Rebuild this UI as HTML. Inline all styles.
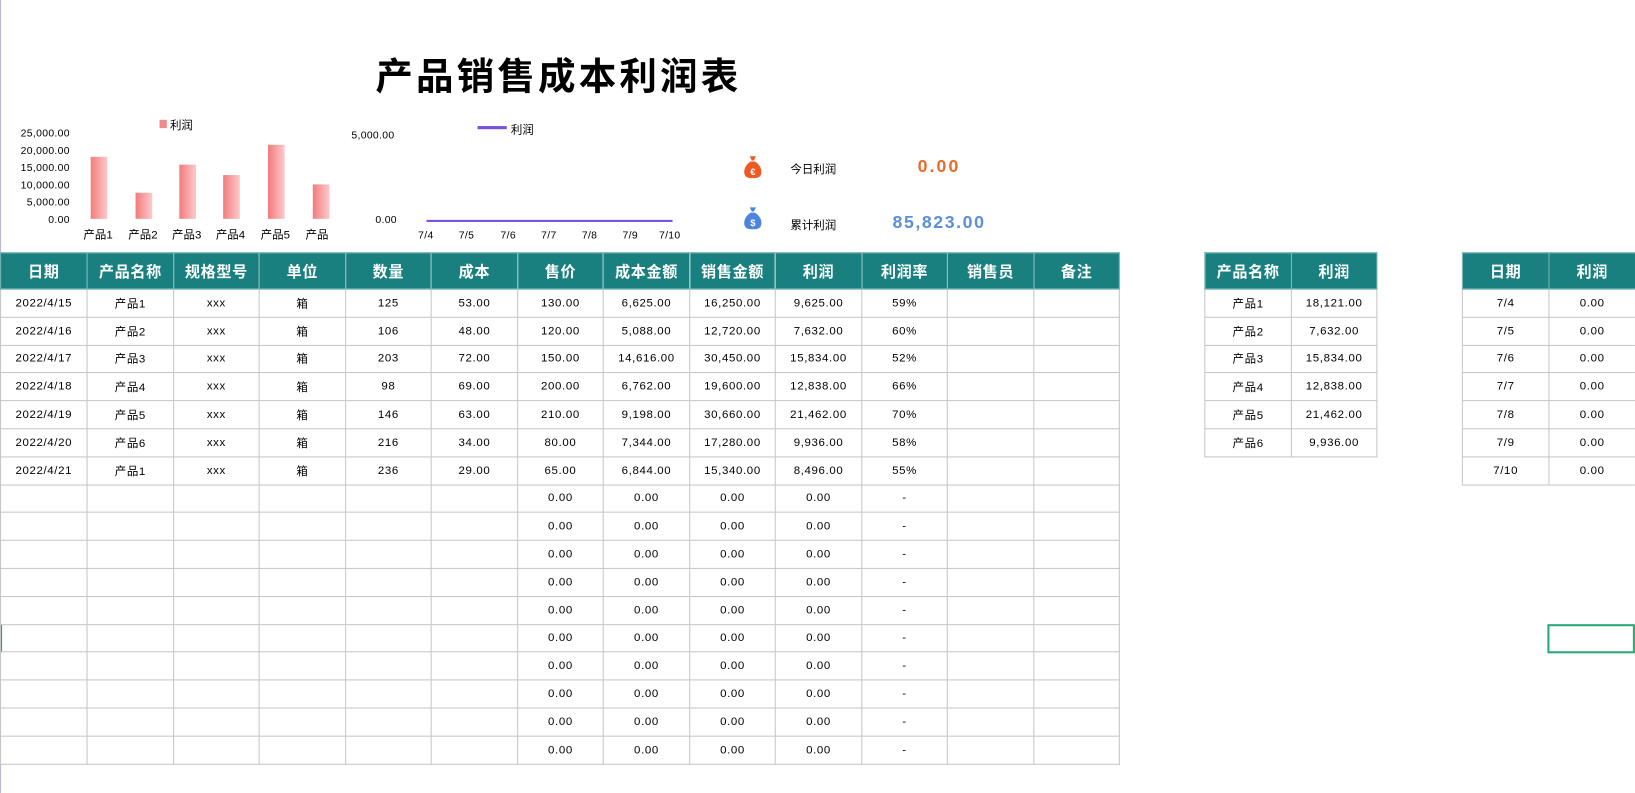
<!DOCTYPE html>
<html><head><meta charset="utf-8"><style>
html,body{margin:0;padding:0;background:#fff;overflow:hidden;width:1635px;height:793px}
#w{position:absolute;left:0;top:0;width:1568px;height:761px;transform:scale(1.0427,1.042);transform-origin:0 0;font-family:"Liberation Sans","Noto Sans CJK SC",sans-serif;color:#000}
.a{position:absolute;white-space:nowrap}
table{position:absolute;border-collapse:collapse;table-layout:fixed}
td,th{border:1px solid #c6c6c6;text-align:center;font-size:11px;height:25.8px;padding:0;overflow:hidden;white-space:nowrap}
th{background:#19807f;color:#fff;font-size:14.5px;font-weight:bold;height:34px;border-color:#6fb0b0}
.m{letter-spacing:.6px}
.ax{font-size:10px;letter-spacing:.3px}
</style></head><body><div id="w">
<div class="a" style="left:0;top:0;width:1px;height:761px;background:#b8b8d8"></div>
<div class="a" style="left:0;top:599px;width:2px;height:27px;background:#2a9d6e"></div>
<div class="a" style="left:360px;top:45px;font-size:36px;font-weight:bold;letter-spacing:3px">产品销售成本利润表</div>

<!-- bar chart -->
<div class="a ax" style="left:15px;top:121px;line-height:16.6px;text-align:right;width:52px">25,000.00<br>20,000.00<br>15,000.00<br>10,000.00<br>5,000.00<br>0.00</div>
<div class="a" style="left:153px;top:115px;width:7px;height:8px;background:#f08a8a"></div>
<div class="a" style="left:163px;top:112px;font-size:11px">利润</div>
<svg class="a" style="left:80px;top:130px" width="250" height="85">
<defs><linearGradient id="g" x1="0" x2="1"><stop offset="0" stop-color="#f37b7b"/><stop offset="1" stop-color="#fcc9cb"/></linearGradient></defs>
<rect x="7" y="20.5" width="16" height="59.5" fill="url(#g)"/>
<rect x="50" y="55" width="16" height="25" fill="url(#g)"/>
<rect x="92" y="28" width="16" height="52" fill="url(#g)"/>
<rect x="134" y="38" width="16" height="42" fill="url(#g)"/>
<rect x="177" y="9" width="16" height="71" fill="url(#g)"/>
<rect x="220" y="47" width="16" height="33" fill="url(#g)"/>
</svg>
<div class="a" style="left:80px;top:217px;font-size:11px">产品1</div>
<div class="a" style="left:123px;top:217px;font-size:11px">产品2</div>
<div class="a" style="left:165px;top:217px;font-size:11px">产品3</div>
<div class="a" style="left:207px;top:217px;font-size:11px">产品4</div>
<div class="a" style="left:250px;top:217px;font-size:11px">产品5</div>
<div class="a" style="left:293px;top:217px;font-size:11px">产品</div>

<!-- line chart -->
<div class="a ax" style="left:337px;top:125px">5,000.00</div>
<div class="a ax" style="left:360px;top:206px">0.00</div>
<div class="a" style="left:458px;top:121px;width:28px;height:3px;background:#7a4fdc"></div>
<div class="a" style="left:490px;top:116px;font-size:11px">利润</div>
<div class="a" style="left:409px;top:211px;width:236px;height:2px;background:#7a4fdc"></div>
<div class="a ax" style="left:401px;top:221px">7/4</div>
<div class="a ax" style="left:440px;top:221px">7/5</div>
<div class="a ax" style="left:480px;top:221px">7/6</div>
<div class="a ax" style="left:519px;top:221px">7/7</div>
<div class="a ax" style="left:558px;top:221px">7/8</div>
<div class="a ax" style="left:597px;top:221px">7/9</div>
<div class="a ax" style="left:632px;top:221px">7/10</div>

<!-- kpi -->
<svg class="a" style="left:712px;top:148px" width="20" height="24"><path d="M7 2h6l-2 4h-2z" fill="#ee5a24"/><path d="M8 7h4c5 3 7 8 6 12-1 3-3 4-8 4s-7-1-8-4c-1-4 1-9 6-12z" fill="#ee5a24"/><text x="10" y="20" font-size="9" fill="#fff" text-anchor="middle" font-family="Liberation Sans" font-weight="bold">€</text></svg>
<svg class="a" style="left:712px;top:197px" width="20" height="24"><path d="M7 2h6l-2 4h-2z" fill="#4a86e0"/><path d="M8 7h4c5 3 7 8 6 12-1 3-3 4-8 4s-7-1-8-4c-1-4 1-9 6-12z" fill="#4a86e0"/><text x="10" y="20" font-size="9" fill="#fff" text-anchor="middle" font-family="Liberation Sans" font-weight="bold">$</text></svg>
<div class="a" style="left:758px;top:154px;font-size:11px">今日利润</div>
<div class="a" style="left:880px;top:150px;font-size:17px;font-weight:bold;color:#ee6a2a;letter-spacing:2px">0.00</div>
<div class="a" style="left:758px;top:208px;font-size:11px">累计利润</div>
<div class="a" style="left:856px;top:204px;font-size:17px;font-weight:bold;color:#5b8fd8;letter-spacing:1.5px">85,823.00</div>

<table class="m" style="left:0;top:242px;width:1073px">
<colgroup><col style="width:83px"><col style="width:83px"><col style="width:82px"><col style="width:83px"><col style="width:82px"><col style="width:83px"><col style="width:82px"><col style="width:83px"><col style="width:82px"><col style="width:83px"><col style="width:82px"><col style="width:83px"><col style="width:82px"></colgroup>
<tr><th>日期</th><th>产品名称</th><th>规格型号</th><th>单位</th><th>数量</th><th>成本</th><th>售价</th><th>成本金额</th><th>销售金额</th><th>利润</th><th>利润率</th><th>销售员</th><th>备注</th></tr>
<tr><td>2022/4/15</td><td>产品1</td><td>xxx</td><td>箱</td><td>125</td><td>53.00</td><td>130.00</td><td>6,625.00</td><td>16,250.00</td><td>9,625.00</td><td>59%</td><td></td><td></td></tr>
<tr><td>2022/4/16</td><td>产品2</td><td>xxx</td><td>箱</td><td>106</td><td>48.00</td><td>120.00</td><td>5,088.00</td><td>12,720.00</td><td>7,632.00</td><td>60%</td><td></td><td></td></tr>
<tr><td>2022/4/17</td><td>产品3</td><td>xxx</td><td>箱</td><td>203</td><td>72.00</td><td>150.00</td><td>14,616.00</td><td>30,450.00</td><td>15,834.00</td><td>52%</td><td></td><td></td></tr>
<tr><td>2022/4/18</td><td>产品4</td><td>xxx</td><td>箱</td><td>98</td><td>69.00</td><td>200.00</td><td>6,762.00</td><td>19,600.00</td><td>12,838.00</td><td>66%</td><td></td><td></td></tr>
<tr><td>2022/4/19</td><td>产品5</td><td>xxx</td><td>箱</td><td>146</td><td>63.00</td><td>210.00</td><td>9,198.00</td><td>30,660.00</td><td>21,462.00</td><td>70%</td><td></td><td></td></tr>
<tr><td>2022/4/20</td><td>产品6</td><td>xxx</td><td>箱</td><td>216</td><td>34.00</td><td>80.00</td><td>7,344.00</td><td>17,280.00</td><td>9,936.00</td><td>58%</td><td></td><td></td></tr>
<tr><td>2022/4/21</td><td>产品1</td><td>xxx</td><td>箱</td><td>236</td><td>29.00</td><td>65.00</td><td>6,844.00</td><td>15,340.00</td><td>8,496.00</td><td>55%</td><td></td><td></td></tr>
<tr><td></td><td></td><td></td><td></td><td></td><td></td><td>0.00</td><td>0.00</td><td>0.00</td><td>0.00</td><td>-</td><td></td><td></td></tr>
<tr><td></td><td></td><td></td><td></td><td></td><td></td><td>0.00</td><td>0.00</td><td>0.00</td><td>0.00</td><td>-</td><td></td><td></td></tr>
<tr><td></td><td></td><td></td><td></td><td></td><td></td><td>0.00</td><td>0.00</td><td>0.00</td><td>0.00</td><td>-</td><td></td><td></td></tr>
<tr><td></td><td></td><td></td><td></td><td></td><td></td><td>0.00</td><td>0.00</td><td>0.00</td><td>0.00</td><td>-</td><td></td><td></td></tr>
<tr><td></td><td></td><td></td><td></td><td></td><td></td><td>0.00</td><td>0.00</td><td>0.00</td><td>0.00</td><td>-</td><td></td><td></td></tr>
<tr><td></td><td></td><td></td><td></td><td></td><td></td><td>0.00</td><td>0.00</td><td>0.00</td><td>0.00</td><td>-</td><td></td><td></td></tr>
<tr><td></td><td></td><td></td><td></td><td></td><td></td><td>0.00</td><td>0.00</td><td>0.00</td><td>0.00</td><td>-</td><td></td><td></td></tr>
<tr><td></td><td></td><td></td><td></td><td></td><td></td><td>0.00</td><td>0.00</td><td>0.00</td><td>0.00</td><td>-</td><td></td><td></td></tr>
<tr><td></td><td></td><td></td><td></td><td></td><td></td><td>0.00</td><td>0.00</td><td>0.00</td><td>0.00</td><td>-</td><td></td><td></td></tr>
<tr><td></td><td></td><td></td><td></td><td></td><td></td><td>0.00</td><td>0.00</td><td>0.00</td><td>0.00</td><td>-</td><td></td><td></td></tr>
</table>

<table class="m" style="left:1155px;top:242px;width:165px">
<colgroup><col style="width:83px"><col style="width:82px"></colgroup>
<tr><th>产品名称</th><th>利润</th></tr>
<tr><td>产品1</td><td>18,121.00</td></tr>
<tr><td>产品2</td><td>7,632.00</td></tr>
<tr><td>产品3</td><td>15,834.00</td></tr>
<tr><td>产品4</td><td>12,838.00</td></tr>
<tr><td>产品5</td><td>21,462.00</td></tr>
<tr><td>产品6</td><td>9,936.00</td></tr>
</table>

<table class="m" style="left:1402px;top:242px;width:166px">
<colgroup><col style="width:83px"><col style="width:83px"></colgroup>
<tr><th>日期</th><th>利润</th></tr>
<tr><td>7/4</td><td>0.00</td></tr>
<tr><td>7/5</td><td>0.00</td></tr>
<tr><td>7/6</td><td>0.00</td></tr>
<tr><td>7/7</td><td>0.00</td></tr>
<tr><td>7/8</td><td>0.00</td></tr>
<tr><td>7/9</td><td>0.00</td></tr>
<tr><td>7/10</td><td>0.00</td></tr>
</table>
<div class="a" style="left:1484px;top:599px;width:80px;height:24px;border:2px solid #2aa878"></div>
</div></body></html>
